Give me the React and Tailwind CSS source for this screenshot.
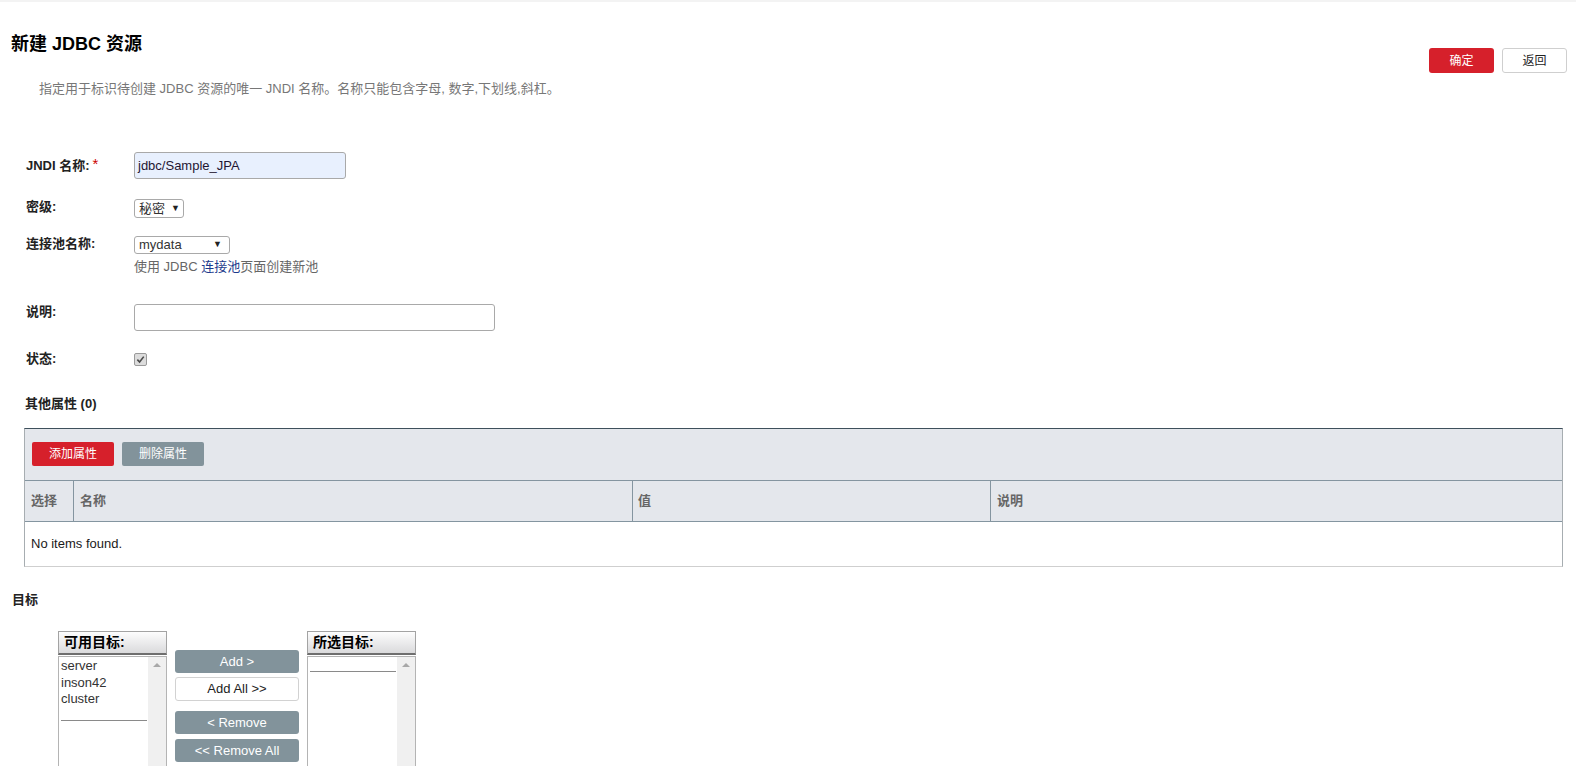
import React from "react";

const FONT = { fontFamily: '"Liberation Sans", Arial, "Noto Sans CJK SC", sans-serif' };

function Check() {
  return (
    <div className="w-[13px] h-[13px] border border-[#9a9a9a] rounded-[2px] bg-[#dcdcdc] flex items-center justify-center">
      <svg width="9" height="9" viewBox="0 0 10 10">
        <path d="M1.5 5.2 L4 7.8 L8.6 1.8" fill="none" stroke="#4a4a4a" strokeWidth="1.8" />
      </svg>
    </div>
  );
}

function ListBox({ title, items, sepTop }) {
  return (
    <div className="w-[109px] flex flex-col">
      <div className="h-[24px] border border-[#a3a3a3] border-b-2 border-b-[#6e6e6e] bg-gradient-to-b from-[#fdfdfd] to-[#dadadc] pl-[5px] text-[14px] font-bold leading-[20px] text-black">
        {title}
      </div>
      <div className="mt-[1px] h-[130px] border border-[#b4b4b4] flex">
        <div className="flex-1 flex flex-col pt-[1px] pl-[2px] text-[13px] leading-[16.5px] text-[#333]">
          {items.map((it) => (
            <div key={it}>{it}</div>
          ))}
          <div className="h-px bg-[#8a8a8a] w-[86px]" style={{ marginTop: sepTop }} />
        </div>
        <div className="w-[18px] bg-[#f0f0f0] flex justify-center pt-[6px]">
          <div className="w-0 h-0 border-l-[4px] border-r-[4px] border-b-[4px] border-l-transparent border-r-transparent border-b-[#a8a8a8]" />
        </div>
      </div>
    </div>
  );
}

export default function App() {
  return (
    <div className="w-full min-h-[766px] bg-white text-[13px] text-[#222] border-t-2 border-[#f3f3f3]" style={FONT}>
      {/* Header */}
      <div className="flex justify-between items-start">
        <div className="pt-[31px] pl-[11px]">
          <h1 className="text-[18px] font-bold leading-[22px] text-black">新建 JDBC 资源</h1>
          <p className="mt-[26px] pl-[28px] text-[13px] leading-[16px] text-[#777]">
            指定用于标识待创建 JDBC 资源的唯一 JNDI 名称。名称只能包含字母, 数字,下划线,斜杠。
          </p>
        </div>
        <div className="pt-[46px] pr-[9px] flex gap-[8px]">
          <button className="w-[65px] h-[25px] rounded-[3px] bg-[#d6202b] text-white text-[12px]">确定</button>
          <button className="w-[65px] h-[25px] rounded-[3px] bg-white border border-[#cfcfcf] text-[#222] text-[12px]">返回</button>
        </div>
      </div>

      {/* Form */}
      <div className="pl-[26px] mt-[55px]">
        <div className="flex items-start">
          <div className="w-[108px] pt-[6px] leading-[16px] font-bold flex">
            JNDI 名称: <span className="text-[#c00] font-normal text-[15px] leading-[12px] ml-[3px]">*</span>
          </div>
          <div className="w-[212px] h-[27px] border border-[#a9a9a9] rounded-[3px] bg-[#e8f0fe] pl-[3px] leading-[25px] text-[13px] text-[#1f1633]">
            jdbc/Sample_JPA
          </div>
        </div>

        <div className="flex items-start mt-[20px]">
          <div className="w-[108px] leading-[16px] font-bold">密级:</div>
          <div className="w-[50px] h-[19px] border border-[#a9a9a9] rounded-[3px] flex items-center pl-[4px] text-[13px] text-[#333]">
            秘密<span className="ml-[6px] text-[9px] text-[#222]">▼</span>
          </div>
        </div>

        <div className="flex items-start mt-[18px]">
          <div className="w-[108px] leading-[16px] font-bold">连接池名称:</div>
          <div className="flex flex-col">
            <div className="w-[96px] h-[18px] border border-[#a9a9a9] rounded-[3px] flex items-center justify-between pl-[4px] pr-[7px] text-[13px] text-[#333]">
              <span>mydata</span>
              <span className="text-[9px] text-[#222]">▼</span>
            </div>
            <div className="mt-[5px] leading-[16px] text-[#666]">
              使用 JDBC <span className="text-[#1b3a8c]">连接池</span>页面创建新池
            </div>
          </div>
        </div>

        <div className="flex items-start mt-[29px]">
          <div className="w-[108px] leading-[16px] font-bold">说明:</div>
          <div className="w-[361px] h-[27px] border border-[#a9a9a9] rounded-[3px] bg-white" />
        </div>

        <div className="flex items-start mt-[20px]">
          <div className="w-[108px] leading-[16px] font-bold">状态:</div>
          <div className="mt-[2px]">
            <Check />
          </div>
        </div>

        <div className="mt-[29px] -ml-[1px] leading-[16px] font-bold">其他属性 (0)</div>
      </div>

      {/* Table */}
      <div className="ml-[24px] mr-[13px] mt-[16px] border-t border-t-[#3e505c] border-x border-x-[#a7adb1] border-b border-b-[#cfcfcf]">
        <div className="bg-[#e4e7ec] pt-[13px] pb-[14px] pl-[7px] flex gap-[8px]">
          <button className="w-[82px] h-[24px] rounded-[2px] bg-[#d6202b] text-white text-[12px]">添加属性</button>
          <button className="w-[82px] h-[24px] rounded-[2px] bg-[#82939b] text-white text-[12px]">删除属性</button>
        </div>
        <div className="flex h-[42px] bg-[#e4e7ec] border-y border-[#8495a0] font-bold text-[#666] leading-[40px]">
          <div className="w-[49px] pl-[6px] border-r border-[#8495a0]">选择</div>
          <div className="w-[559px] pl-[6px] border-r border-[#8495a0]">名称</div>
          <div className="w-[358px] pl-[5px] border-r border-[#8495a0]">值</div>
          <div className="flex-1 pl-[6px]">说明</div>
        </div>
        <div className="h-[44px] pl-[6px] leading-[44px] text-[13px] text-[#1a1a1a]">No items found.</div>
      </div>

      {/* Targets */}
      <div className="pl-[12px] mt-[25px] leading-[16px] font-bold">目标</div>
      <div className="ml-[58px] mt-[23px] flex items-start gap-[8px]">
        <ListBox title="可用目标:" items={["server", "inson42", "cluster"]} sepTop="12px" />
        <div className="w-[124px] pt-[19px] flex flex-col text-[13px]">
          <button className="h-[23px] rounded-[3px] bg-[#82939b] text-white">Add &gt;</button>
          <button className="mt-[4px] h-[24px] rounded-[3px] bg-white border border-[#d2d2d2] text-[#222]">Add All &gt;&gt;</button>
          <button className="mt-[10px] h-[23px] rounded-[3px] bg-[#82939b] text-white">&lt; Remove</button>
          <button className="mt-[5px] h-[23px] rounded-[3px] bg-[#82939b] text-white">&lt;&lt; Remove All</button>
        </div>
        <ListBox title="所选目标:" items={[]} sepTop="13px" />
      </div>
    </div>
  );
}
